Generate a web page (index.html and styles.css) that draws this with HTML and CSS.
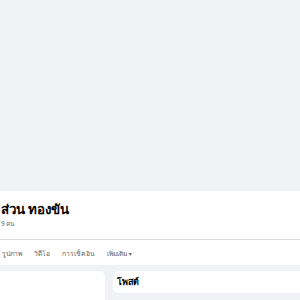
FILE: index.html
```html
<!DOCTYPE html>
<html lang="th">
<head>
    <meta charset="UTF-8">
    <meta name="viewport" content="width=device-width, initial-scale=1.0">
    <title>Profile</title>
    <link rel="stylesheet" href="styles.css">
</head>
<body>
    <div class="cover"></div>

    <div class="header">
        <div class="name-block">
            <h1 class="name">ส่วน ทองขัน</h1>
            <div class="friends">9 คน</div>
        </div>
        <div class="tabs">
            <span class="tab">รูปภาพ</span>
            <span class="tab">วิดีโอ</span>
            <span class="tab">การเช็คอิน</span>
            <span class="tab">เพิ่มเติม <span class="caret">▾</span></span>
        </div>
    </div>

    <div class="main">
        <div class="card left-card"></div>
        <div class="card posts-card">
            <h2>โพสต์</h2>
        </div>
    </div>
</body>
</html>
```

FILE: styles.css
```css
body {
    margin: 0;
    width: 300px;
    height: 300px;
    overflow: hidden;
    background: #f0f2f5;
    font-family: "Noto Sans", "DejaVu Sans", sans-serif;
    color: #050505;
}
.cover {
    height: 191px;
    background: #f0f2f5;
}
.header {
    background: white;
}
.name-block {
    height: 49px;
    box-sizing: border-box;
    padding: 8px 0 0 1px;
    border-bottom: 1px solid #dadde1;
}
.name {
    margin: 0;
    font-size: 13.3px;
    font-weight: bold;
    line-height: 20px;
}
.friends {
    font-size: 6.5px;
    color: #65676b;
    line-height: 10px;
}
.tabs {
    height: 25px;
    display: flex;
    align-items: center;
    gap: 12px;
    padding: 1px 0 0 2px;
    box-sizing: border-box;
}
.tab {
    font-size: 6.8px;
    color: #65676b;
}
.caret {
    font-size: 6px;
}
.main {
    display: flex;
    gap: 8px;
    padding-top: 6px;
}
.card {
    background: white;
}
.left-card {
    width: 105px;
    height: 40px;
    border-radius: 0 6px 0 0;
}
.posts-card {
    flex: 1;
    height: 22px;
    border-radius: 6px 0 0 6px;
    padding-left: 4px;
    display: flex;
    align-items: center;
}
.posts-card h2 {
    margin: 0;
    font-size: 9px;
    font-weight: bold;
}
```
